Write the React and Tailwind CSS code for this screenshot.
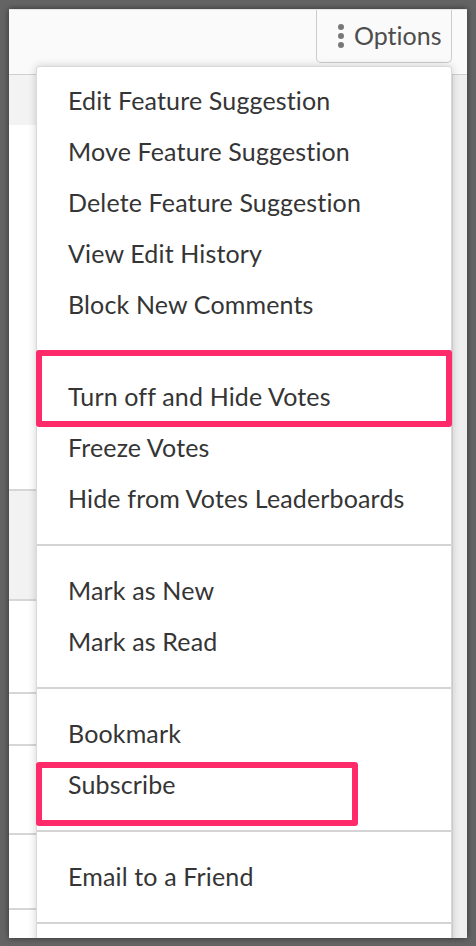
import React from 'react';

const sections = [
  ['Edit Feature Suggestion', 'Move Feature Suggestion', 'Delete Feature Suggestion', 'View Edit History', 'Block New Comments'],
  ['Turn off and Hide Votes', 'Freeze Votes', 'Hide from Votes Leaderboards'],
  ['Mark as New', 'Mark as Read'],
  ['Bookmark', 'Subscribe'],
  ['Email to a Friend'],
];

// rows of the page behind the menu (only the left edge shows)
const rows = [
  { h: 50, bg: 'bg-[#f3f3f3]', line: false },
  { h: 366, bg: 'bg-white', line: true },
  { h: 110, bg: 'bg-[#f2f2f2]', line: true },
  { h: 93, bg: 'bg-white', line: true },
  { h: 52, bg: 'bg-white', line: true },
  { h: 89, bg: 'bg-white', line: true },
  { h: 75, bg: 'bg-white', line: true },
  { h: 40, bg: 'bg-white', line: false },
];

function OptionsMenu() {
  return (
    <div className="absolute left-[27px] top-[57px] w-[416px] rounded-t-[3px] border border-[#d9d9d9] bg-white shadow-[0_0_8px_rgba(0,0,0,0.18)]">
      {sections.map((items, i) => (
        <div
          key={i}
          className={`${i === 0 ? 'pt-[8.5px]' : 'pt-[19.5px] border-t-2 border-[#d4d4d4]'} pb-[19.5px]`}
        >
          {items.map((label) => (
            <div key={label} className="flex h-[51px] items-center pl-[31px] text-[25px] tracking-[0.15px] text-[#353535]">
              {label}
            </div>
          ))}
        </div>
      ))}
      <div className="h-[40px] border-t-2 border-[#d4d4d4]" />
    </div>
  );
}

export default function App() {
  return (
    <div
      className="relative h-[946px] w-[476px] overflow-hidden bg-[#646464] pb-[8px] pl-[9px] pr-[9px] pt-[9px] [font-variant-ligatures:none]"
      style={{ fontFamily: 'Lato, "Open Sans", sans-serif' }}
    >
      <div className="relative flex h-full flex-col overflow-hidden bg-white shadow-[0_0_6px_rgba(0,0,0,0.5)]">
        {/* header */}
        <div className="flex h-[66px] shrink-0 justify-end border-b border-t border-[#cfcfcf] border-t-[#e6e6e6] bg-[#fafafa] pr-[15px]">
          <div className="flex h-[53px] w-[136px] items-center gap-[10px] rounded-b-[5px] border border-t-0 border-[#cccccc] pl-[21px] text-[25px] text-[#4d4d4d]">
            <div className="flex flex-col gap-[3px]">
              <span className="h-[6px] w-[6px] rounded-full bg-[#777777]" />
              <span className="h-[6px] w-[6px] rounded-full bg-[#777777]" />
              <span className="h-[6px] w-[6px] rounded-full bg-[#777777]" />
            </div>
            <span>Options</span>
          </div>
        </div>

        {/* page body */}
        <div className="flex flex-1">
          <div className="flex-1">
            {rows.map((r, i) => (
              <div
                key={i}
                style={{ height: r.h }}
                className={`${r.bg} ${r.line ? 'border-b-2 border-[#d6d6d6]' : ''}`}
              />
            ))}
          </div>
          <div className="w-[15px] border-l border-[#dddddd] bg-[#eeeeee]" />
        </div>

        <OptionsMenu />
      </div>

      {/* highlight annotations */}
      <div className="absolute left-[36px] top-[350px] h-[77px] w-[416px] rounded-[3px] border-[6px] border-[#ff2a6a]" />
      <div className="absolute left-[36px] top-[762px] h-[64px] w-[322px] rounded-[3px] border-[6px] border-[#ff2a6a]" />
    </div>
  );
}
